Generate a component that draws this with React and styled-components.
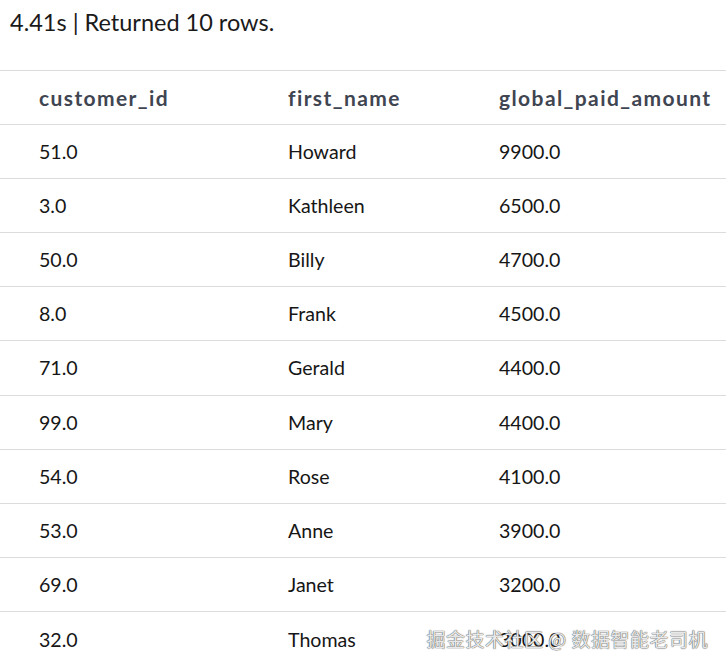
import React from "react";
import styled, { createGlobalStyle } from "styled-components";

const Global = createGlobalStyle`
  html, body { margin: 0; padding: 0; background: #fff; }
  body { font-family: "Lato", "Noto Sans", sans-serif; color: #111; }
`;

const Page = styled.div`
  position: relative;
  width: 726px;
  height: 669px;
  overflow: hidden;
  background: #fff;
`;

const Summary = styled.div`
  padding: 7px 0 0 10px;
  height: 70px;
  box-sizing: border-box;
  font-size: 23.5px;
  line-height: 30px;
  color: #1a1a1a;
`;

const Table = styled.div`
  border-top: 1px solid #dcdcdc;
`;

const Row = styled.div`
  display: grid;
  grid-template-columns: 249px 211px 1fr;
  padding-left: 39px;
  height: ${(p) => (p.$head ? "54px" : "54.12px")};
  align-items: center;
  border-bottom: ${(p) => (p.$last ? "none" : "1px solid #dcdcdc")};
  box-sizing: border-box;
`;

const HeadCell = styled.div`
  font-size: 21px;
  font-weight: 700;
  color: #3f4551;
  letter-spacing: 1.4px;
  white-space: nowrap;
`;

const Cell = styled.div`
  font-size: 19.6px;
  color: #161616;
  white-space: nowrap;
`;

const Watermark = styled.div`
  position: absolute;
  right: 18px;
  bottom: 17px;
  font-family: "Noto Sans CJK SC", sans-serif;
  font-size: 19px;
  color: #e8e8e8;
  text-shadow: 0 0 1px #555, 0 0 1px #555;
  letter-spacing: 0.5px;
`;

const rows = [
  ["51.0", "Howard", "9900.0"],
  ["3.0", "Kathleen", "6500.0"],
  ["50.0", "Billy", "4700.0"],
  ["8.0", "Frank", "4500.0"],
  ["71.0", "Gerald", "4400.0"],
  ["99.0", "Mary", "4400.0"],
  ["54.0", "Rose", "4100.0"],
  ["53.0", "Anne", "3900.0"],
  ["69.0", "Janet", "3200.0"],
  ["32.0", "Thomas", "3000.0"],
];

export default function App() {
  return (
    <Page>
      <Global />
      <Summary>4.41s | Returned 10 rows.</Summary>
      <Table>
        <Row $head>
          <HeadCell>customer_id</HeadCell>
          <HeadCell>first_name</HeadCell>
          <HeadCell>global_paid_amount</HeadCell>
        </Row>
        {rows.map((r, i) => (
          <Row key={i} $last={i === rows.length - 1}>
            <Cell>{r[0]}</Cell>
            <Cell>{r[1]}</Cell>
            <Cell>{r[2]}</Cell>
          </Row>
        ))}
      </Table>
      <Watermark>掘金技术社区 @ 数据智能老司机</Watermark>
    </Page>
  );
}
